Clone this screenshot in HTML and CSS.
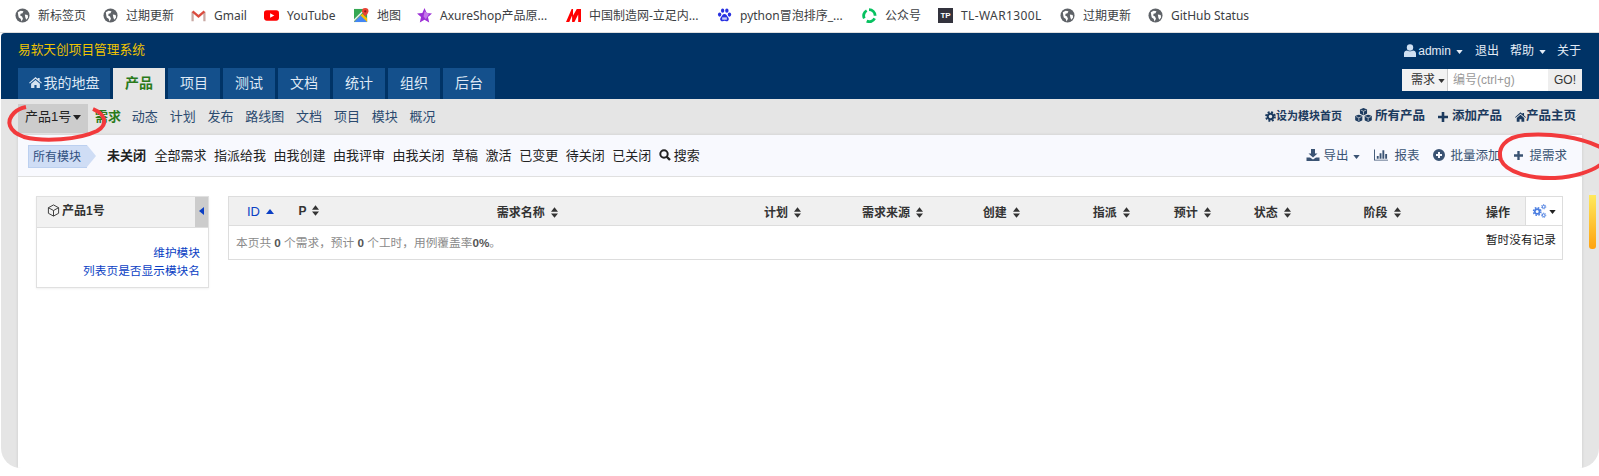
FILE: index.html
```html
<!DOCTYPE html>
<html lang="zh-CN">
<head>
    <meta charset="UTF-8">
    <title>易软天创项目管理系统</title>
    <link rel="stylesheet" href="styles.css">
</head>
<body>
    <svg class="sprite">
        <symbol id="globe" viewBox="0 0 16 16">
            <circle cx="8" cy="8" r="7.5" fill="#5f6368"/>
            <path d="M3 4.5 6 3l3 .5-1 2-2 .5-.5 2 2 1 1 2.500-1.500 3-1-3-2-1.500-.5-2zM10.500 7l3 .5.500 2.500-2 2.500-1-2.500z" fill="#fff"/>
        </symbol>
        <symbol id="caret" viewBox="0 0 8 5"><path d="M0 0h8L4 5z"/></symbol>
        <symbol id="sort" viewBox="0 0 8 12"><path d="M4 0l4 5H0zM0 7h8l-4 5z"/></symbol>
        <symbol id="plus" viewBox="0 0 10 10"><path d="M3.700 0h2.600v3.700H10v2.600H6.300V10H3.700V6.300H0V3.700h3.700z"/></symbol>
        <symbol id="home" viewBox="0 0 14 12"><path d="M7 0l2.500 2.200V1h2v3l2.500 2.300-.8.800L7 1.800 .8 7.100 0 6.300zM2.200 7.400 7 3.200l4.800 4.200V12H8.200V8.800H5.800V12H2.200z"/></symbol>
        <symbol id="cog" viewBox="0 0 14 14">
            <circle cx="7" cy="7" r="3.500" fill="none" stroke="currentColor" stroke-width="2.500"/>
            <circle cx="7" cy="7" r="5.700" fill="none" stroke="currentColor" stroke-width="2.200" stroke-dasharray="2.500 2"/>
        </symbol>
        <symbol id="cube" viewBox="0 0 8 8">
            <path d="M4 0l4 1.700v4.300L4 8 0 6V1.700z"/>
            <path d="M1 2.200 4 3.500l3-1.300M4 3.500V7" fill="none" stroke="#e5e5e5" stroke-width=".7"/>
        </symbol>
    </svg>

    <div class="bookmarks">
        <a class="bm bm-a"><svg class="bm-icon"><use href="#globe"/></svg>新标签页</a>
        <a class="bm bm-b"><svg class="bm-icon"><use href="#globe"/></svg>过期更新</a>
        <a class="bm bm-c">
            <svg class="bm-icon" viewBox="0 0 16 16" fill="none" stroke-width="2.400"><path d="M1.700 14V4M14.300 14V4" stroke="#c9a9a4"/><path d="M1.700 3.500 8 9l6.300-5.500" stroke="#db4c3f"/></svg>Gmail</a>
        <a class="bm bm-d">
            <svg class="bm-icon" viewBox="0 0 16 16"><rect y="2.500" width="16" height="11" rx="3" fill="#f00"/><path d="M6.500 5.500 11 8l-4.500 2.500z" fill="#fff"/></svg>YouTube</a>
        <a class="bm bm-e">
            <svg class="bm-icon" viewBox="0 0 16 16"><path d="M0 1h14v14H0z" fill="#35a852"/><path d="M0 15 9 6l5 5v4z" fill="#fbbc04"/><path d="M0 15 7 8l7 7z" fill="#4285f4"/><path d="M0 12 11 1h2L0 14z" fill="#f1f1f1"/><path d="M12 0a3.500 3.500 0 0 1 3.500 3.500C15.500 5.500 12 9 12 9S8.500 5.500 8.500 3.500A3.500 3.500 0 0 1 12 0z" fill="#ea4335"/><circle cx="12" cy="3.500" r="1.200" fill="#8c1c13"/></svg>地图</a>
        <a class="bm bm-f">
            <svg class="bm-icon" viewBox="0 0 16 16"><path d="M8 0l2.300 5.300 5.700.5-4.300 3.700L13 15.500 8 12.400 3 15.500l1.300-6L0 5.800l5.700-.5z" fill="#9b2fd6"/><path d="M8 3.500 13 6 9.500 12 7 9z" fill="#c477ea"/></svg>AxureShop产品原...</a>
        <a class="bm bm-g">
            <svg class="bm-icon" viewBox="0 0 16 16"><path d="M0 15 6 1h1.500v7L11.500 1H16v14h-3V7L9 15H6.500V8L3.500 15z" fill="#f00"/></svg>中国制造网-立足内...</a>
        <a class="bm bm-h">
            <svg class="bm-icon" viewBox="0 0 16 16" fill="#2932e1"><ellipse cx="2.800" cy="7" rx="1.800" ry="2.300"/><ellipse cx="6" cy="2.800" rx="1.800" ry="2.300"/><ellipse cx="10.500" cy="2.800" rx="1.800" ry="2.300"/><ellipse cx="13.300" cy="7" rx="1.800" ry="2.300"/><path d="M8 6.500c2 0 2.500 2 4 3.500 1.500 2 0 4.300-2 4-1-.1-1.500-.4-2-.4s-1 .3-2 .4c-2 .3-3.500-2-2-4C5.500 8.500 6 6.500 8 6.500z"/><rect x="5.500" y="10" width="5" height="2.500" fill="#c8cdf7"/></svg>python冒泡排序_...</a>
        <a class="bm bm-i">
            <svg class="bm-icon" viewBox="0 0 16 16" fill="none" stroke="#07c160" stroke-width="3"><path d="M2.500 11A6 6 0 0 1 5 2.800"/><path d="M7.500 1.700a6.500 6.500 0 0 1 6.500 6.500"/><path d="M13.500 11a6.500 6.500 0 0 1-8.500 3"/></svg>公众号</a>
        <a class="bm bm-j"><span class="tp-icon">TP</span>TL-WAR1300L</a>
        <a class="bm bm-k"><svg class="bm-icon"><use href="#globe"/></svg>过期更新</a>
        <a class="bm"><svg class="bm-icon"><use href="#globe"/></svg>GitHub Status</a>
    </div>

    <div class="app">
        <header class="header">
            <div class="header-top">
                <div class="brand">易软天创项目管理系统</div>
                <div class="user-menu">
                    <a class="user-link"><svg class="icon-user" viewBox="0 0 12 13"><circle cx="6" cy="3.500" r="3.200"/><path d="M0 13V9.500C0 7.500 1.500 6.500 3 6.500c1 1 5 1 6 0 1.500 0 3 1 3 3V13z"/></svg>admin<svg class="caret"><use href="#caret"/></svg></a>
                    <a>退出</a>
                    <a>帮助<svg class="caret"><use href="#caret"/></svg></a>
                    <a>关于</a>
                </div>
            </div>
            <div class="header-nav">
                <nav class="tabs">
                    <a class="tab tab-home"><svg class="icon-home"><use href="#home"/></svg>我的地盘</a>
                    <a class="tab active">产品</a>
                    <a class="tab">项目</a>
                    <a class="tab">测试</a>
                    <a class="tab">文档</a>
                    <a class="tab">统计</a>
                    <a class="tab">组织</a>
                    <a class="tab">后台</a>
                </nav>
                <div class="search">
                    <span class="search-type">需求<svg class="caret"><use href="#caret"/></svg></span>
                    <span class="search-input">编号(ctrl+g)</span>
                    <span class="search-go">GO!</span>
                </div>
            </div>
        </header>

        <div class="subnav">
            <a class="product-pick">产品1号<svg class="caret"><use href="#caret"/></svg></a>
            <div class="subnav-links">
                <a class="current">需求</a>
                <a>动态</a>
                <a>计划</a>
                <a>发布</a>
                <a>路线图</a>
                <a>文档</a>
                <a>项目</a>
                <a>模块</a>
                <a>概况</a>
            </div>
            <div class="subnav-right">
                <a class="small"><svg class="ic-cog"><use href="#cog"/></svg>设为模块首页</a>
                <a><svg class="ic-cubes" viewBox="0 0 18 15"><use href="#cube" x="5" y="0" width="8" height="8"/><use href="#cube" x="0" y="7" width="8" height="8"/><use href="#cube" x="10" y="7" width="8" height="8"/></svg>所有产品</a>
                <a><svg class="ic-plus"><use href="#plus"/></svg>添加产品</a>
                <a class="tight"><svg class="ic-home"><use href="#home"/></svg>产品主页</a>
            </div>
        </div>

        <main class="content">
            <div class="filterbar">
                <span class="crumb">所有模块</span>
                <div class="filters">
                    <a class="on">未关闭</a>
                    <a>全部需求</a>
                    <a>指派给我</a>
                    <a>由我创建</a>
                    <a>由我评审</a>
                    <a>由我关闭</a>
                    <a>草稿</a>
                    <a>激活</a>
                    <a>已变更</a>
                    <a>待关闭</a>
                    <a>已关闭</a>
                    <a class="search-link"><svg viewBox="0 0 12 12" class="ic-search"><circle cx="5" cy="5" r="3.700" fill="none" stroke="#222" stroke-width="2"/><path d="M7.500 7.500 11 11" stroke="#222" stroke-width="2.400"/></svg>搜索</a>
                </div>
                <div class="actions">
                    <a><svg class="ic-act dl" viewBox="0 0 13 12"><path d="M4.500 0h4v4.500H11L6.500 8.500 2 4.500h2.500zM0 8.500h3.500l3 2 3-2H13V12H0z"/></svg>导出<svg class="caret"><use href="#caret"/></svg></a>
                    <a><svg class="ic-act wide" viewBox="0 0 15 12"><path d="M0 0h1v11h14v1H0zM3 7h2v3H3zM6 4h2v6H6zM9 1h2v9H9zM12 5h2v5h-2z"/></svg>报表</a>
                    <a><svg class="ic-act round" viewBox="0 0 12 12"><path fill-rule="evenodd" d="M6 0a6 6 0 1 1 0 12A6 6 0 0 1 6 0zM5 3v2H3v2h2v2h2V7h2V5H7V3z"/></svg>批量添加</a>
                    <a><svg class="ic-act small"><use href="#plus"/></svg>提需求</a>
                </div>
            </div>

            <div class="body">
                <aside class="tree">
                    <div class="tree-head">
                        <span class="tree-title"><svg class="ic-box" viewBox="0 0 14 14" fill="none" stroke="#333"><path d="M7 1l5.500 3v6L7 13l-5.500-3V4zM1.500 4 7 7l5.500-3M7 7v6"/></svg>产品1号</span>
                        <span class="tree-toggle"></span>
                    </div>
                    <div class="tree-body">
                        <a>维护模块</a>
                        <a>列表页是否显示模块名</a>
                    </div>
                </aside>

                <table class="stories">
                    <colgroup>
                        <col class="c-id"><col class="c-p"><col class="c-name"><col class="c-plan"><col class="c-src">
                        <col class="c-by"><col class="c-to"><col class="c-est"><col class="c-state"><col class="c-stage">
                        <col class="c-op"><col class="c-gear">
                    </colgroup>
                    <thead>
                        <tr>
                            <th class="th-id"><a>ID</a><i class="sort-up"></i></th>
                            <th>P<svg class="sort"><use href="#sort"/></svg></th>
                            <th class="th-name">需求名称<svg class="sort"><use href="#sort"/></svg></th>
                            <th>计划<svg class="sort"><use href="#sort"/></svg></th>
                            <th>需求来源<svg class="sort"><use href="#sort"/></svg></th>
                            <th>创建<svg class="sort"><use href="#sort"/></svg></th>
                            <th>指派<svg class="sort"><use href="#sort"/></svg></th>
                            <th>预计<svg class="sort"><use href="#sort"/></svg></th>
                            <th>状态<svg class="sort"><use href="#sort"/></svg></th>
                            <th>阶段<svg class="sort"><use href="#sort"/></svg></th>
                            <th class="th-op">操作</th>
                            <th class="th-gear">
                                <svg class="ic-gear" viewBox="0 0 15 15"><use href="#cog" x="0" y="3" width="10" height="10"/><use href="#cog" x="9" y="0" width="6" height="6"/><use href="#cog" x="9" y="9" width="6" height="6"/></svg><svg class="caret"><use href="#caret"/></svg>
                            </th>
                        </tr>
                    </thead>
                    <tbody>
                        <tr>
                            <td colspan="12" class="summary-cell">
                                <div class="summary">
                                    <span>本页共 <b>0</b> 个需求，预计 <b>0</b> 个工时，用例覆盖率<b>0%</b>。</span>
                                    <span class="empty">暂时没有记录</span>
                                </div>
                            </td>
                        </tr>
                    </tbody>
                </table>
            </div>
        </main>

        <div class="scroll-thumb"></div>
    </div>

    <!-- hand drawn red marks on top of the page -->
    <svg class="marks" viewBox="0 0 1599 476" fill="none" stroke="#f23a3c" stroke-width="4">
        <path d="M93 109C105 114 109 124 97 131 78 140 44 142 24 137 8 131 6 121 14 113 17 110 21 108 26 107"/>
        <path d="M1600 147C1580 137 1550 133 1525 135 1505 137 1497 148 1501 160 1506 172 1530 179 1555 178 1575 177 1592 171 1600 165"/>
    </svg>
</body>
</html>
```

FILE: styles.css
```css
* {
    box-sizing: border-box;
}

html, body {
    margin: 0;
    height: 100%;
    background: #fff;
}

body {
    position: relative;
    overflow: hidden;
    font-family: "Liberation Sans", "Noto Sans CJK SC", sans-serif;
    font-size: 13px;
    color: #333;
}

a {
    color: inherit;
    text-decoration: none;
}

.sprite {
    display: none;
}

.caret {
    width: 7px;
    height: 4px;
    margin-left: 5px;
    fill: currentColor;
    vertical-align: middle;
}

/* browser bookmarks bar */
.bookmarks {
    display: flex;
    align-items: center;
    height: 33px;
    padding: 0 0 2px 15px;
    background: #fff;
    border-bottom: 1px solid #dedede;
    font-family: "Noto Sans", "Noto Sans CJK SC", sans-serif;
    font-size: 12px;
    color: #3c4043;
}

.bm {
    display: flex;
    align-items: center;
    gap: 8px;
    white-space: nowrap;
}

.bm-a { width: 88px; }
.bm-b { width: 88px; }
.bm-c { width: 73px; }
.bm-d { width: 90px; }
.bm-e { width: 63px; }
.bm-f { width: 149px; }
.bm-g { width: 151px; }
.bm-h { width: 145px; }
.bm-i { width: 76px; }
.bm-j { width: 122px; letter-spacing: .4px; }
.bm-k { width: 88px; }

.bm-icon, .tp-icon {
    flex: none;
    width: 15px;
    height: 15px;
}

.tp-icon {
    display: block;
    background: #33333d;
    color: #fff;
    font: bold 8px/15px "Liberation Sans", sans-serif;
    letter-spacing: 0;
    text-align: center;
}

/* app frame */
.app {
    position: relative;
    display: flex;
    flex-direction: column;
    height: 435px;
    margin-left: 1px;
    background: #e5e5e5;
    border-radius: 4px 0 20px 20px;
    overflow: hidden;
}

.header {
    height: 66px;
    padding: 0 17px;
    background: #003366;
    color: #e3ecf6;
}

.header-top {
    display: flex;
    justify-content: space-between;
    height: 35px;
}

.brand {
    padding-top: 6px;
    font-size: 12.700px;
    color: #f0c400;
}

.user-menu {
    display: flex;
    gap: 11px;
    margin-right: 1px;
    padding-top: 9px;
    font-size: 12px;
    line-height: 18px;
}

.user-link {
    margin-right: 1px;
}

.icon-user {
    width: 12px;
    height: 13px;
    margin-right: 2px;
    fill: #cfe0f2;
    vertical-align: -2px;
}

.header-nav {
    display: flex;
    justify-content: space-between;
}

.tabs {
    display: flex;
    gap: 3px;
}

.tab {
    width: 52px;
    height: 31px;
    background: #14508c;
    font-size: 14px;
    line-height: 31px;
    text-align: center;
    color: #dfe9f5;
}

.tab-home {
    width: 92px;
}

.tab.active {
    background: #e5e5e5;
    color: #2a7a1a;
    font-weight: bold;
}

.icon-home {
    width: 13px;
    height: 11px;
    margin-right: 2px;
    fill: #d5e2f0;
}

.search {
    display: flex;
    height: 22px;
    margin-top: 1px;
    font-size: 12px;
    line-height: 22px;
    color: #333;
}

.search-type {
    width: 46px;
    padding-left: 9px;
    background: #f2f2f2;
    border-right: 1px solid #ccc;
    white-space: nowrap;
}

.search-type .caret {
    margin-left: 3px;
}

.search-input {
    width: 100px;
    padding-left: 5px;
    background: #fff;
    color: #999;
}

.search-go {
    width: 34px;
    background: #eee;
    text-align: center;
}

/* second level nav */
.subnav {
    display: flex;
    align-items: flex-start;
    height: 36px;
    padding: 5px 17px 0;
    line-height: 25px;
    color: #2b4a6f;
}

.product-pick {
    display: block;
    width: 70px;
    height: 29px;
    padding-left: 7px;
    background: #ccc;
    color: #222;
    white-space: nowrap;
}

.product-pick .caret {
    width: 8px;
    height: 5px;
    margin-left: 2px;
}

.subnav-links {
    display: flex;
    gap: 11.800px;
    margin-left: 7px;
}

.subnav-links .current {
    font-weight: bold;
    color: #2a7a1a;
    margin-right: -1px;
}

.subnav-right {
    display: flex;
    align-items: center;
    gap: 13px;
    margin-left: auto;
    margin-right: 6px;
    font-size: 12.500px;
    font-weight: bold;
    color: #1c3a5e;
}

.subnav-right .small {
    font-size: 11px;
}

.subnav-right svg {
    fill: #1c3a5e;
    vertical-align: -2px;
}

.ic-cog {
    width: 11px;
    height: 11px;
    color: #1c3a5e;
}

.ic-cubes {
    width: 17px;
    height: 14px;
    margin-right: 3px;
}

.ic-plus {
    width: 10px;
    height: 10px;
    margin-right: 4px;
}

.ic-home {
    width: 11px;
    height: 10px;
}

/* main panel */
.content {
    flex: 1;
    margin: 0 17px;
    background: #fff;
    box-shadow: 0 0 3px rgba(0, 0, 0, .12);
}

.filterbar {
    display: flex;
    align-items: center;
    height: 42px;
    padding: 0 15px 2px 10px;
    background: #f8f9fe;
    border-bottom: 1px solid #e0e0e0;
}

.crumb {
    position: relative;
    width: 59px;
    height: 23px;
    margin-top: 4px;
    padding-left: 4px;
    background: #cfddf5;
    border: 1px solid #bcd0f0;
    border-right: 0;
    font-size: 12px;
    line-height: 22px;
    color: #2f5080;
    white-space: nowrap;
}

.crumb::after {
    content: "";
    position: absolute;
    top: -1px;
    left: 100%;
    border-left: 9px solid #cfddf5;
    border-top: 11.500px solid transparent;
    border-bottom: 11.500px solid transparent;
}

.filters {
    display: flex;
    gap: 7.500px;
    margin-left: 20px;
    color: #222;
}

.filters .on {
    font-weight: bold;
    margin-right: 1px;
}

.ic-search {
    width: 12px;
    height: 12px;
    margin-right: 3px;
    vertical-align: -1px;
}

.actions {
    display: flex;
    gap: 14px;
    margin-left: auto;
    font-size: 12.500px;
    color: #3a5373;
}

.ic-act {
    width: 13px;
    height: 12px;
    margin-right: 5px;
    fill: #3a5373;
    vertical-align: -1px;
}

.ic-act.dl {
    width: 14px;
    margin-right: 3px;
}

.ic-act.wide {
    width: 14px;
    margin-right: 6px;
}

.ic-act.round {
    width: 12px;
}

.ic-act.small {
    width: 9px;
    height: 9px;
    margin-right: 6px;
    vertical-align: 0;
}

.body {
    display: flex;
    align-items: flex-start;
    gap: 19px;
    padding: 19px 19px 0 18px;
}

/* module tree */
.tree {
    flex: none;
    width: 173px;
    height: 92px;
    border: 1px solid #e0e0e0;
    box-shadow: 0 1px 2px rgba(0, 0, 0, .06);
}

.tree-head {
    display: flex;
    justify-content: space-between;
    height: 31px;
    background: #f1f1f1;
    border-bottom: 1px solid #ddd;
}

.tree-title {
    padding-left: 10px;
    font-size: 12px;
    font-weight: bold;
    line-height: 29px;
}

.ic-box {
    width: 13px;
    height: 13px;
    margin-right: 2px;
    vertical-align: -2px;
}

.tree-toggle {
    position: relative;
    width: 13px;
    background: #ccc;
}

.tree-toggle::after {
    content: "";
    position: absolute;
    top: 10px;
    left: 4px;
    border-right: 5px solid #0b3fc4;
    border-top: 4px solid transparent;
    border-bottom: 4px solid transparent;
}

.tree-body {
    display: flex;
    flex-direction: column;
    align-items: flex-end;
    padding: 16px 8px 0 0;
    font-size: 11.700px;
    line-height: 18px;
    color: #0b3fc4;
}

/* story table */
.stories {
    flex: 1;
    table-layout: fixed;
    border-collapse: collapse;
    border: 1px solid #ddd;
}

.c-id { width: 62px; }
.c-p { width: 32px; }
.c-name { width: 434px; }
.c-plan { width: 98px; }
.c-src { width: 121px; }
.c-by { width: 110px; }
.c-to { width: 81px; }
.c-est { width: 80px; }
.c-state { width: 110px; }
.c-stage { width: 100px; }
.c-op { width: 70px; }
.c-gear { width: 37px; }

.stories th {
    height: 29px;
    padding: 0 0 0 8px;
    background: #f0f0f0;
    border-bottom: 1px solid #ddd;
    font-size: 12px;
    text-align: left;
    white-space: nowrap;
}

.stories .th-id {
    padding-left: 18px;
    font-size: 13px;
    font-weight: normal;
    color: #0b3fc4;
}

.stories .th-name {
    padding: 0 24px 0 0;
    text-align: center;
}

.stories .th-op {
    padding: 0 15px 0 0;
    text-align: right;
}

.stories .th-gear {
    padding: 0 0 0 6px;
    background: #fff;
    border-left: 1px solid #ddd;
}

.sort {
    width: 7px;
    height: 11px;
    margin-left: 6px;
    fill: #333;
    vertical-align: -1px;
}

.sort-up {
    display: inline-block;
    margin-left: 6px;
    border-left: 4px solid transparent;
    border-right: 4px solid transparent;
    border-bottom: 5px solid #0b3fc4;
    vertical-align: 2px;
}

.ic-gear {
    width: 15px;
    height: 14px;
    color: #4a7de0;
    vertical-align: -2px;
}

.th-gear .caret {
    margin-left: 2px;
    color: #222;
}

.summary-cell {
    height: 34px;
    padding: 0 6px 0 7px;
}

.summary {
    display: flex;
    justify-content: space-between;
    align-items: flex-start;
    height: 18px;
    font-size: 11.700px;
    line-height: 18px;
    color: #8a8a8a;
}

.summary b {
    color: #555;
}

.empty {
    margin-top: -3px;
    color: #222;
}

.scroll-thumb {
    position: absolute;
    top: 158px;
    right: 3px;
    width: 7px;
    height: 58px;
    border-radius: 3px;
    background: linear-gradient(#e8e8e8 0 4px, #ffe95c 4px, #ffa310);
}

.marks {
    position: absolute;
    top: 0;
    left: 0;
    width: 1599px;
    height: 476px;
    pointer-events: none;
}
```
